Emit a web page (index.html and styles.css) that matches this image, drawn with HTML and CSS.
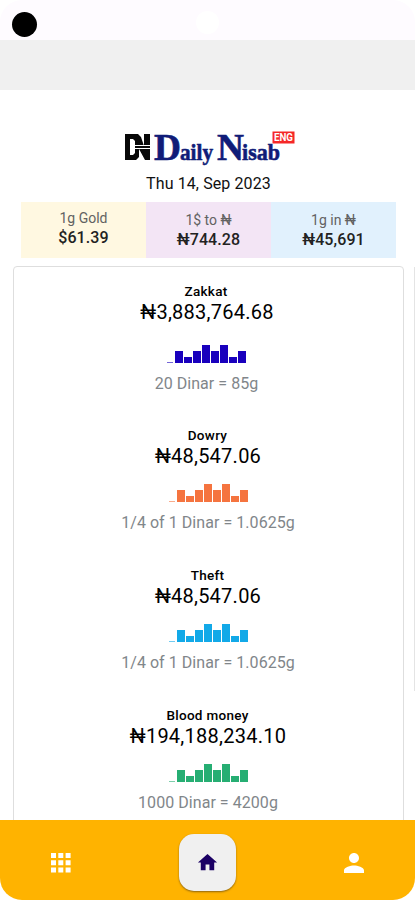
FILE: index.html
```html
<!DOCTYPE html>
<html lang="en">
<head>
<meta charset="utf-8">
<title>Daily Nisab</title>
<link rel="stylesheet" href="styles.css">
</head>
<body>
<div class="phone">
  <div class="status"><span class="record"></span><span class="camera"></span></div>
  <div class="banner"></div>
  <main class="content">
    <svg class="logo" width="174" height="48" viewBox="0 -6 174 48">
      <path class="mark" fill-rule="evenodd" d="M1 5H14L17 8L20 17V5H26V31H21L15 20V28L12 31H1ZM6 10V26H9L11 24V12L9 10Z"/>
      <path class="mark-line" d="M7 16.5H26M7 19.5H26"/>
      <g class="wordmark">
        <text x="30" y="31" font-size="38" textLength="27" lengthAdjust="spacingAndGlyphs">D</text>
        <text x="56" y="31" font-size="24" textLength="33" lengthAdjust="spacingAndGlyphs">aily</text>
        <text x="93" y="31" font-size="38" textLength="27" lengthAdjust="spacingAndGlyphs">N</text>
        <text x="118" y="31" font-size="24" textLength="38" lengthAdjust="spacingAndGlyphs">isab</text>
      </g>
      <rect class="tag" x="148.500" y="2.500" width="22" height="12"/>
      <text class="tag-text" x="150" y="12.200" textLength="19" lengthAdjust="spacingAndGlyphs">ENG</text>
    </svg>
    <div class="date">Thu 14, Sep 2023</div>
    <section class="rates">
      <div class="rate gold"><span class="rate-label">1g Gold</span><span class="rate-value">$61.39</span></div>
      <div class="rate dollar"><span class="rate-label">1$ to ₦</span><span class="rate-value">₦744.28</span></div>
      <div class="rate naira"><span class="rate-label">1g in ₦</span><span class="rate-value">₦45,691</span></div>
    </section>
    <section class="card">
      <article class="item zakkat">
        <h2>Zakkat</h2><p class="amount">₦3,883,764.68</p>
        <div class="spark"><i class="dash"></i><i class="mid"></i><i class="low"></i><i class="mid"></i><i class="high"></i><i class="mid"></i><i class="high"></i><i class="low"></i><i class="mid"></i></div>
        <p class="note">20 Dinar = 85g</p>
      </article>
      <article class="item dowry">
        <h2>Dowry</h2><p class="amount">₦48,547.06</p>
        <div class="spark"><i class="dash"></i><i class="mid"></i><i class="low"></i><i class="mid"></i><i class="high"></i><i class="mid"></i><i class="high"></i><i class="low"></i><i class="mid"></i></div>
        <p class="note">1/4 of 1 Dinar = 1.0625g</p>
      </article>
      <article class="item theft">
        <h2>Theft</h2><p class="amount">₦48,547.06</p>
        <div class="spark"><i class="dash"></i><i class="mid"></i><i class="low"></i><i class="mid"></i><i class="high"></i><i class="mid"></i><i class="high"></i><i class="low"></i><i class="mid"></i></div>
        <p class="note">1/4 of 1 Dinar = 1.0625g</p>
      </article>
      <article class="item blood">
        <h2>Blood money</h2><p class="amount">₦194,188,234.10</p>
        <div class="spark"><i class="dash"></i><i class="mid"></i><i class="low"></i><i class="mid"></i><i class="high"></i><i class="mid"></i><i class="high"></i><i class="low"></i><i class="mid"></i></div>
        <p class="note">1000 Dinar = 4200g</p>
      </article>
    </section>
    <span class="scrollbar"></span>
  </main>
  <nav class="tabs">
    <a class="tab"><svg width="20" height="20" viewBox="0 0 20 20"><path d="M0 0h5v5H0zM7.300 0h5v5h-5zM14.600 0h5v5h-5zM0 7.300h5v5H0zM7.300 7.300h5v5h-5zM14.600 7.300h5v5h-5zM0 14.600h5v5H0zM7.300 14.600h5v5h-5zM14.600 14.600h5v5h-5z"/></svg></a>
    <a class="home"><svg width="23" height="23" viewBox="0 0 24 24"><path d="M10 20v-6h4v6h5v-8h3L12 3 2 12h3v8z"/></svg></a>
    <a class="tab"><svg width="20" height="20" viewBox="4 4 16 16"><path d="M12 12c2.210 0 4-1.790 4-4s-1.790-4-4-4-4 1.790-4 4 1.790 4 4 4zm0 2c-2.670 0-8 1.340-8 4v2h16v-2c0-2.660-5.330-4-8-4z"/></svg></a>
  </nav>
</div>
</body>
</html>
```
FILE: styles.css
```css
* { box-sizing: border-box; }
body { margin: 0; background: #fff; font-family: Roboto, "Liberation Sans", sans-serif; color: #111; }
h2, p { margin: 0; }
.phone { width: 415px; height: 900px; display: flex; flex-direction: column; overflow: hidden; border-radius: 22px; background: #fff; }
.status { height: 40px; flex: none; position: relative; background: #fefbff; }
.record { position: absolute; left: 12px; top: 12px; width: 25px; height: 25px; border-radius: 50%; background: #000; }
.camera { position: absolute; left: 196px; top: 11px; width: 23px; height: 23px; border-radius: 50%; background: #fff; }
.banner { height: 50px; flex: none; background: #f0f0f0; }
.content { height: 730px; flex: none; overflow: hidden; position: relative; display: flex; flex-direction: column; }
.logo { margin: 33px 0 0 124px; flex: none; }
.mark { fill: #080808; }
.mark-line { stroke: #fff; stroke-width: 1; fill: none; }
.wordmark { fill: #101c78; stroke: #101c78; stroke-width: .6; font-family: "Liberation Serif", serif; font-weight: bold; }
.tag { fill: #f52727; }
.tag-text { fill: #fff; font-size: 10px; font-weight: bold; }
.date { flex: none; height: 20px; margin-top: 3px; line-height: 20px; font-size: 16px; letter-spacing: .1px; text-align: center; padding-left: 2px; }
.rates { flex: none; display: grid; grid-template-columns: repeat(3, 1fr); width: 375px; height: 56px; margin: 8px 0 0 21px; }
.rate { display: flex; flex-direction: column; align-items: center; padding-top: 9px; }
.gold { background: #fff8e1; padding-top: 7px; }
.dollar { background: #f3e5f5; }
.naira { background: #e1f1fd; }
.rate-label { font-size: 14px; line-height: 19px; color: #626262; }
.rate-value { font-size: 16px; line-height: 19px; letter-spacing: .1px; font-weight: 500; color: #222; }
.card { flex: none; width: 391px; height: 620px; margin: 8px 0 0 13px; padding-top: 15px; border: 1px solid #dedede; border-radius: 4px; }
.item { display: flex; flex-direction: column; align-items: center; height: 140px; padding-right: 1px; }
.item h2 { font-size: 13.5px; line-height: 19px; letter-spacing: .3px; font-weight: 500; color: #000; padding-right: 1px; }
.amount { font-size: 20px; line-height: 22px; letter-spacing: .25px; color: #000; }
.spark { display: flex; align-items: flex-end; gap: 1px; height: 18px; margin: 17px 0 0; color: #1900bd; }
.spark i { width: 8px; background: currentColor; }
.spark .dash { width: 6px; height: 1px; margin-right: 1px; opacity: .6; }
.spark .low { height: 6px; }
.spark .mid { height: 12px; }
.spark .high { height: 18px; }
.note { font-size: 16px; line-height: 20px; margin-top: 11px; letter-spacing: .05px; color: #81868a; }
.zakkat { height: 144px; padding-right: 4px; }
.zakkat .amount { padding-left: 1px; }
.zakkat .spark { margin: 22px 1px 0 0; }
.dowry .spark { color: #f5743f; }
.theft .spark { color: #12a9e8; }
.blood .spark { color: #26ae73; margin-left: 1px; }
.scrollbar { position: absolute; right: 0; top: 177px; width: 1px; height: 424px; background: #e4e4e4; }
.tabs { flex: none; height: 80px; display: grid; grid-template-columns: 122px 1fr 122px; align-items: center; justify-items: center; background: #ffb300; padding-top: 5px; }
.tab { height: 20px; fill: #fff; }
.home { width: 57px; height: 57px; display: grid; place-items: center; border-radius: 15px; background: #f0f0f0; fill: #1b0064; box-shadow: 0 1px 2px #8d6510; }
```
